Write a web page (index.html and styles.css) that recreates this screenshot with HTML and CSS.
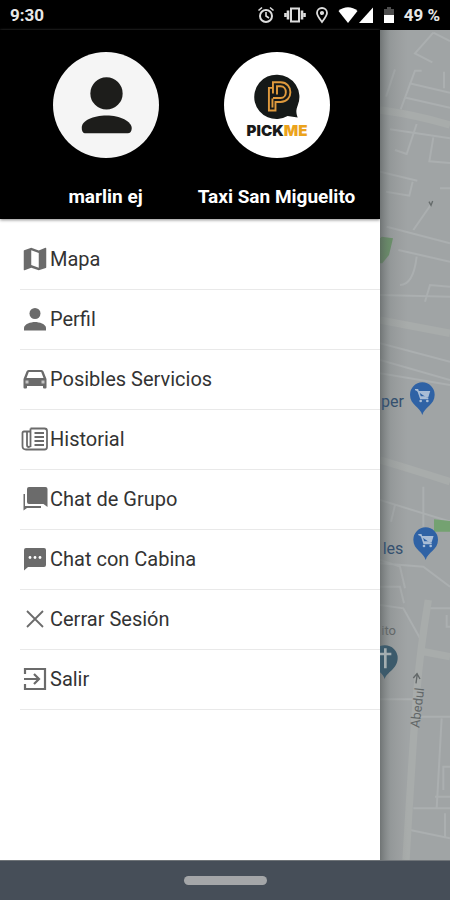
FILE: index.html
```html
<!DOCTYPE html>
<html lang="es">
<head>
<meta charset="utf-8">
<meta name="viewport" content="width=device-width, initial-scale=1">
<title>Taxi San Miguelito</title>
<link rel="stylesheet" href="styles.css">
</head>
<body>
<div class="screen">
  <header class="status">
    <span>9:30</span>
    <div class="status-icons">
      <svg width="18" height="18" viewBox="0 0 18 18" fill="none" stroke="#ddd" stroke-width="2"><circle cx="9" cy="10" r="6"/><path d="M9 6v4l3 2M1.500 4.500 5 1.500M16.500 4.500 13 1.500" stroke-width="1.600"/></svg>
      <svg width="22" height="18" viewBox="0 0 22 18" fill="none" stroke="#ddd" stroke-width="2"><path d="M7 2.500h8v13H7z"/><path d="M4 4.500v9M18 4.500v9" stroke-width="2.600"/><path d="M1.500 7v4M20.500 7v4" stroke-width="2.600"/></svg>
      <svg width="14" height="18" viewBox="0 0 14 18" fill="none" stroke="#ddd" stroke-width="1.800"><path d="M7 16C4 12 2 9.500 2 7a5 5 0 0 1 10 0c0 2.500-2 5-5 9z"/><circle cx="7" cy="7" r="1.200" fill="#ddd"/></svg>
      <span class="signal">
        <svg width="20" height="18" viewBox="0 0 20 18" fill="#fff"><path d="M.500 5C6 0 14 0 19.500 5L10 17z"/></svg>
        <svg width="16" height="18" viewBox="0 0 16 18" fill="#fff"><path d="M15 1.500V17H1z"/></svg>
      </span>
      <svg width="12" height="18" viewBox="0 0 12 18"><path d="M4 1h4v2h3v6H1V3h3z" fill="#4d4d4d"/><path d="M1 9h10v8H1z" fill="#fff"/></svg>
      <span class="battery">49 %</span>
    </div>
  </header>

  <main class="content">
    <div class="drawer">
      <section class="profiles">
        <div class="profile">
          <svg class="avatar" viewBox="0 0 105 105"><circle cx="52.500" cy="52.500" r="52.500" fill="#f5f5f5"/><g fill="#1d1d1b"><circle cx="53" cy="41" r="16"/><path d="M28.500 75c0-7 11-12 24.500-12S78 69 78 75.500c0 3-1.500 5-4 5H32.500c-3 0-4-2-4-5.500z"/></g></svg>
          <span class="name">marlin ej</span>
        </div>
        <div class="profile">
          <svg class="avatar" viewBox="0 0 105 105"><circle cx="52.500" cy="52.500" r="52.500" fill="#fff"/><path d="M53 22.500a22 22 0 0 1 20 30.500c-2 5-1.500 8 0 12l-10-1.500A22 22 0 1 1 53 22.500z" fill="#151918"/><g fill="none" stroke="#df9a3d" stroke-width="1.900"><path d="M48.500 41V30H56c13 0 13 19.500 0 19.500h-5v8.500h-6.500V35.500h4M48.500 45.500H56c7 0 7-11.500 0-11.500h-3.500v8"/><path d="M48 55V46"/></g><text class="brand" x="52.500" y="83" text-anchor="middle">PICK<tspan fill="#eba31c">ME</tspan></text></svg>
          <span class="name">Taxi San Miguelito</span>
        </div>
      </section>

      <nav class="menu">
        <a href="#mapa"><svg viewBox="0 0 24 24"><path d="M20.500 3l-.16.030L15 5.100 9 3 3.360 4.900c-.21.070-.36.250-.36.480V20.500c0 .28.220.5.5.5l.16-.03L9 18.900l6 2.100 5.640-1.900c.21-.07.360-.25.360-.48V3.500c0-.28-.22-.5-.5-.5zM15 19l-6-2.110V5l6 2.110V19z"/></svg>Mapa</a>
        <a href="#perfil"><svg viewBox="0 0 30 30"><circle cx="15" cy="9.500" r="5.500"/><path d="M4 26.500V24c0-4 7-6 11-6s11 2 11 6v2.500z"/></svg>Perfil</a>
        <a href="#servicios"><svg viewBox="0 0 30 30"><path fill-rule="evenodd" d="M8.500 6h13q1.500 0 2 1.500L26.500 15v8.500q0 1-1 1H24q-1 0-1-1V22H7v1.500q0 1-1 1H4.500q-1 0-1-1V15l3-7.500Q7 6 8.500 6zM8.800 8 6.500 14h17L21.200 8z"/><path d="M5.500 16.500h3v3h-3zM21.500 16.500h3v3h-3z" fill="#c4c4c4"/></svg>Posibles Servicios</a>
        <a href="#historial"><svg class="line" viewBox="0 0 30 30"><path d="M10.500 4.500h14q2.500 0 2.500 2.500v16q0 2.500-2.500 2.500H6q-3.500 0-3.500-3.500V9q0-1.500 1.500-1.500h6"/><path d="M10.500 4.500V23M7 8v13q0 2 1.800 2t1.700-2"/><path d="M14.500 9H24M14.500 13H24M14.500 17H24M14.500 21H24"/></svg>Historial</a>
        <a href="#grupo"><svg viewBox="0 0 30 30"><path d="M9 3h16.500q2 0 2 2v18l-4-3H9q-2 0-2-2V5q0-2 2-2z"/><path d="M3.500 10H5v12h16v2H7l-3.500 2.500z"/></svg>Chat de Grupo</a>
        <a href="#cabina"><svg viewBox="0 0 30 30"><path d="M6 4h18q2 0 2 2v15q0 2-2 2H8l-4 3.500V6q0-2 2-2z"/><g fill="#fff"><circle cx="10" cy="13.500" r="1.400"/><circle cx="15" cy="13.500" r="1.400"/><circle cx="20" cy="13.500" r="1.400"/></g></svg>Chat con Cabina</a>
        <a href="#cerrar"><svg class="line" viewBox="0 0 30 30"><path d="M7 7l16 16M23 7 7 23"/></svg>Cerrar Sesión</a>
        <a href="#salir"><svg class="line bold" viewBox="0 0 30 30"><path d="M5 10V5h20v20H5v-5M4 15h15M14 10l5 5-5 5"/></svg>Salir</a>
      </nav>
    </div>

    <svg class="map" viewBox="30 0 210 2490" preserveAspectRatio="xMinYMin slice">
      <defs>
        <linearGradient id="shade"><stop offset="0" stop-color="#565b5b" stop-opacity=".65"/><stop offset=".15" stop-color="#777c7c" stop-opacity=".3"/><stop offset=".4" stop-color="#888" stop-opacity="0"/></linearGradient>
        <g id="shop"><path d="M0 96C-6 72-37 66-37 35a37 37 0 0 1 74 0C37 66 6 72 0 96z" fill="#2f62a5"/><path d="M-22 20h8l9 27h23M-11 26h32l-5 16H-6z" fill="#a9bdd6" stroke="#a9bdd6" stroke-width="4"/><circle cx="-5" cy="54" r="4" fill="#a9bdd6"/><circle cx="15" cy="54" r="4" fill="#a9bdd6"/></g>
      </defs>
      <path class="land" d="M30 0h1000v2490H30z"/>
      <g class="roads">
        <path d="M190 8 135 70l52 27M190 8l50 25M75 118 48 200M155 122h-20L92 238M118 160l122 28M108 203l132 30M222 125v50M60 298l80 12 100 15M140 282l-30 90-35-12M190 322l-12 72 62 5M30 425l112 27M128 455l-10 42-70-12M210 475h30M182 525l-52 75M50 590l190 50M85 660l155 35M140 680q-10 85-50 85M240 770l-60-5-15 50M30 795l210 5"/>
        <path d="M30 940l210 55M30 990l210 60M30 1030l210 35M160 1370v120M75 1425l-12 50M30 1410l210 65M30 1590l60 20 15 65M30 1600l130 10 80 60M30 1670h60l12 50"/>
        <path d="M30 1725l70 10 50 90M165 1735h75M230 1755v35h10M30 2008h110M145 2060h95M215 2065l-15 270M240 2210h-20v70M130 2335h110M120 2400l120 25M195 2300h45M225 2350v75"/>
      </g>
      <g class="avenues">
        <path d="M30 240q110 15 210 45M30 870l210 40M30 1290q100 30 210 65M175 1710Q150 1860 140 1990T108 2490M160 1865l80 15"/>
      </g>
      <path d="M35 620l34 5-12 50-20 25H30v-75z" fill="#649461"/>
      <path d="M192 1468l48 5v32h-48z" fill="#74a271"/>
      <path d="M177 515l6 11 5-13" fill="none" stroke="#666c6c" stroke-width="4"/>
      <path class="edge" d="M30 0h210v2490H30z"/>
      <use href="#shop" x="157" y="1059"/>
      <use href="#shop" x="167" y="1494"/>
      <path d="M44 1948c-4-22-38-30-38-64a38 38 0 0 1 77 0c0 34-34 42-39 64z" fill="#3c5a6b"/>
      <path d="M46 1855v60M30 1872h34" stroke="#a3adb0" stroke-width="8"/>
      <text class="place" x="33" y="1130">per</text>
      <text class="place" x="38" y="1571">les</text>
      <text class="street" x="34" y="1814">ito</text>
      <text class="street" transform="translate(148 2095) rotate(-83)">Abedul</text>
      <path d="M142 1930l-4 30M130 1944l11-13 9 16" fill="none" stroke="#626768" stroke-width="4"/>
    </svg>
  </main>

  <footer class="system-bar"><span class="handle"></span></footer>
</div>
</body>
</html>
```
FILE: styles.css
```css
* {
  box-sizing: border-box;
}

body {
  margin: 0;
  background: #000;
  font-family: Roboto, "Liberation Sans", sans-serif;
}

.screen {
  display: flex;
  flex-direction: column;
  min-height: 100vh;
}

.status {
  display: flex;
  align-items: center;
  justify-content: space-between;
  height: 30px;
  padding: 0 10px;
  background: #000;
  color: #e8e8e8;
  font-size: 17px;
  font-weight: 700;
}

.status-icons {
  display: flex;
  align-items: center;
  gap: 9px;
}

.signal {
  display: flex;
}

.content {
  flex: 1;
  display: flex;
}

.drawer {
  flex: 0 1 380px;
  background: #fff;
}

.profiles {
  display: grid;
  grid-template-columns: 1fr 1fr;
  padding: 22px 18px 10px 20px;
  background: #000;
  box-shadow: 0 1px 3px #888;
}

.profile {
  display: flex;
  flex-direction: column;
  align-items: center;
  gap: 27px;
}

.avatar {
  width: 106px;
  height: 106px;
}

.brand {
  font: 900 15px Inter, "Liberation Sans", sans-serif;
  fill: #191919;
}

.name {
  color: #fff;
  font-size: 19px;
  font-weight: 700;
  line-height: 24px;
  white-space: nowrap;
}

.menu {
  padding: 11px 0 0 20px;
}

.menu a {
  display: flex;
  align-items: center;
  height: 60px;
  padding-bottom: 1px;
  border-bottom: 1px solid #e9e9e9;
  color: #333;
  font-size: 20px;
  text-decoration: none;
}

.menu svg {
  width: 30px;
  height: 30px;
  fill: #6b6b6b;
}

.menu .line {
  fill: none;
  stroke: #6b6b6b;
  stroke-width: 1.8;
}

.menu .bold {
  stroke-width: 2.2;
}

.map {
  flex: 1 1 0;
  min-width: 0;
  align-self: stretch;
}

.land {
  fill: #a0a4a5;
}

.roads,
.avenues {
  fill: none;
  stroke: #abafb0;
  stroke-width: 6;
}

.avenues {
  stroke-width: 22;
  stroke: #a8acab;
}

.edge {
  fill: url(#shade);
}

.place {
  fill: #34506f;
  font-size: 48px;
}

.street {
  fill: #626768;
  font-size: 39px;
}

.system-bar {
  display: flex;
  align-items: center;
  justify-content: center;
  height: 40px;
  border-top: 1px solid #6f7478;
  background: #464e58;
}

.handle {
  width: 83px;
  height: 9px;
  border-radius: 5px;
  background: #a4a6a8;
}
```
